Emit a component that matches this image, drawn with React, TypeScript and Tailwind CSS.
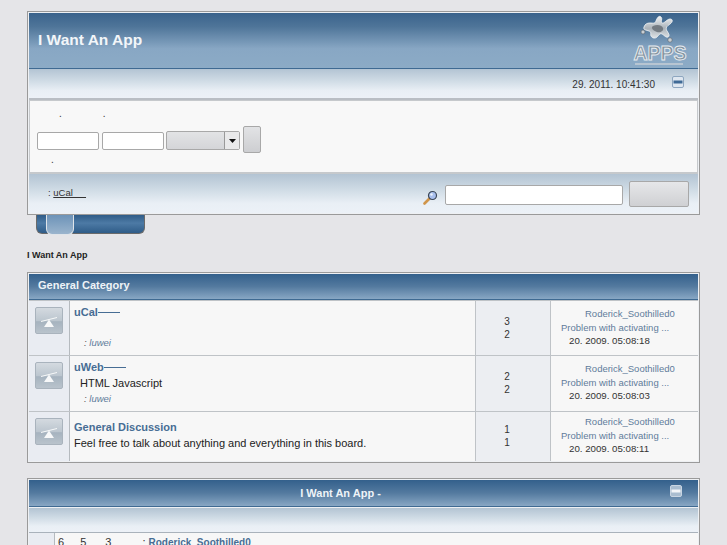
const headBar = "bg-[linear-gradient(to_bottom,#3a638c_0%,#4f7599_25%,#88a7c4_65%,#8cabc6_100%)]";
const subBar = "bg-[linear-gradient(to_bottom,#b3c4d3_0%,#cfdbe5_40%,#e9eff5_75%,#ecf1f7_100%)]";
const catBar = "bg-[linear-gradient(to_bottom,#33608c_0%,#547a9f_50%,#88a7c4_100%)]";

function MinusIcon({ light }: { light?: boolean }) {
  return (
    <svg width="12" height="12" viewBox="0 0 12 12" className="block">
      <rect x="0.5" y="0.5" width="11" height="11" rx="1.5" fill={light ? "#a9bdd0" : "#dfe7f0"} stroke={light ? "#c8d5e2" : "#8ea6bf"} />
      <rect x="1.5" y="4.5" width="9" height="3" fill={light ? "#f2f5f8" : "#3f6a96"} />
    </svg>
  );
}

function Logo() {
  return (
    <svg width="56" height="54" viewBox="0 0 56 54" className="block">
      <defs>
        <linearGradient id="silver" x1="0" y1="0" x2="0" y2="1">
          <stop offset="0" stopColor="#eef1f3" />
          <stop offset="0.55" stopColor="#aab2b9" />
          <stop offset="1" stopColor="#dfe3e6" />
        </linearGradient>
      </defs>
      <path
        d="M17 9c3 0 5 1 6-2s3-6 5-4-1 5 1 6 5-4 8-4 3 3 0 5-5 4-3 7 3 5 1 6-4-2-6-3-3 1-5 3-5 1-6-1 1-4-2-5-6-1-5-4 3-4 6-4z"
        fill="url(#silver)"
        stroke="#f4f6f7"
        strokeWidth="0.8"
      />
      <path d="M20 12c4-2 9-1 10 2s-3 5-6 4-7-4-4-6z" fill="#646c73" opacity="0.8" />
      <circle cx="10" cy="18" r="2" fill="#c9ced3" stroke="#59636c" strokeWidth="0.6" />
      <circle cx="37" cy="26" r="2.2" fill="#c9ced3" stroke="#59636c" strokeWidth="0.6" />
      <text
        x="27"
        y="46"
        textAnchor="middle"
        fontFamily="'Liberation Sans', sans-serif"
        fontWeight="700"
        fontSize="19.5"
        fill="#84939f"
        stroke="#e9edf0"
        strokeWidth="0.9"
      >
        APPS
      </text>
      <rect x="2" y="49" width="48" height="2" fill="#c2ccd5" opacity="0.8" />
    </svg>
  );
}

function SearchIcon() {
  return (
    <svg width="15" height="15" viewBox="0 0 15 15" className="block">
      <path d="M6.5 8.5 1.5 13.5" stroke="#d0954a" strokeWidth="2.6" strokeLinecap="round" />
      <circle cx="9.5" cy="5.5" r="4" fill="#a9c0ee" stroke="#3a4656" strokeWidth="1.2" />
      <circle cx="8.5" cy="4.5" r="1.2" fill="#eef3fb" />
    </svg>
  );
}

function BoardIcon() {
  return (
    <div className="flex h-[27px] w-[28px] items-center justify-center rounded-[2px] border border-[#a9b3bd] bg-[linear-gradient(to_bottom,#d4dae0_0%,#bcc6cf_50%,#a6b3bf_55%,#b9c3cc_100%)]">
      <svg width="18" height="14" viewBox="0 0 18 14">
        <path d="M1 7 17 3v1L1 8z" fill="#f7f8f9" />
        <path d="M9 5.5 14 13H4z" fill="#f7f8f9" />
      </svg>
    </div>
  );
}

type Board = {
  title: string;
  dash?: boolean;
  desc?: string;
  indent?: boolean;
  mod?: string;
  topics: string;
  posts: string;
  date: string;
  rowClass: string;
  bodyPad: string;
  metaPad: string;
};

const boards: Board[] = [
  { title: "uCal", dash: true, mod: "luwei", topics: "3", posts: "2", date: "20. 2009. 05:08:18", rowClass: "h-[55px]", bodyPad: "pt-[4px]", metaPad: "pt-[6px]" },
  { title: "uWeb", dash: true, desc: "HTML Javascript", indent: true, mod: "luwei", topics: "2", posts: "2", date: "20. 2009. 05:08:03", rowClass: "h-[56px]", bodyPad: "pt-[4px]", metaPad: "pt-[6px]" },
  { title: "General Discussion", desc: "Feel free to talk about anything and everything in this board.", topics: "1", posts: "1", date: "20. 2009. 05:08:11", rowClass: "h-[50px]", bodyPad: "pt-[8px]", metaPad: "pt-[3px]" },
];

function BoardRow({ b }: { b: Board }) {
  return (
    <div className={`flex border-t border-[#bfc3c7] first:border-t-0 ${b.rowClass}`}>
      <div className="flex w-[41px] shrink-0 justify-center border-r border-[#b5babf] bg-[#e9ecf2] pt-[6px]">
        <BoardIcon />
      </div>
      <div className={`relative w-[405px] shrink-0 bg-[#f7f7f7] pl-[4px] text-[11px] leading-[15px] text-[#222] ${b.bodyPad}`}>
        <div className="flex items-center font-bold text-[#476d94]">
          {b.title}
          {b.dash && <span className="h-px w-[22px] bg-[#476d94]" />}
        </div>
        {b.desc && <div className={`mt-[1px] ${b.indent ? "pl-[6px]" : ""}`}>{b.desc}</div>}
        {b.mod && (
          <div className="absolute bottom-[6px] left-[14px] text-[9.5px] italic leading-[12px] text-[#5f7c9b]">
            <span className="text-[#555]">: </span>{b.mod}
          </div>
        )}
      </div>
      <div className="flex w-[76px] shrink-0 flex-col items-center justify-center gap-[1px] border-x border-[#bfc3c7] bg-[#eceef2] pr-[12px] text-[10px] leading-[12px] text-[#333]">
        <div>{b.topics}</div>
        <div>{b.posts}</div>
      </div>
      <div className={`flex-1 bg-[#f7f7f7] text-[9.5px] leading-[13.5px] text-[#5f7c9b] ${b.metaPad}`}>
        <div className="pl-[34px]">Roderick_Soothilled0</div>
        <div className="pl-[10px]">Problem with activating ...</div>
        <div className="pl-[18px] text-[9.7px] text-[#333]">{b.date}</div>
      </div>
    </div>
  );
}

export default function App() {
  return (
    <div className="h-[545px] overflow-hidden bg-[#e5e5e8] px-[27px] pt-[11px] font-['Liberation_Sans',Arial,sans-serif]">
      {/* Header box */}
      <div className="relative z-10 border border-[#9a9a9a] bg-[#eef0f3] p-px">
        <div className={`flex h-[56px] items-start justify-between border-b border-[#3f6a92] ${headBar}`}>
          <div className="pl-[9px] pt-[18px] text-[15.5px] font-bold leading-[18px] text-[#f3f6f9]">I Want An App</div>
          <div className="pr-[9px] pt-px"><Logo /></div>
        </div>
        <div className={`flex h-[31px] items-center justify-end border-b-2 border-[#b9bec4] pr-[14px] ${subBar}`}>
          <span className="mr-[17px] mt-[2px] text-[10px] text-[#333]">29. 2011. 10:41:30</span>
          <div className="mb-[4px]"><MinusIcon /></div>
        </div>
        <div className="flex h-[74px] flex-col border border-b-2 border-[#c6c9cc] bg-[#f8f8f8] pl-[7px]">
          <div className="flex h-[18px] items-end pl-[22px] text-[10px] leading-[10px] text-[#333]">
            <span>.</span>
            <span className="ml-[41px]">.</span>
          </div>
          <div className="mt-[6px] flex items-start">
            <input className="mt-[7px] h-[18px] w-[62px] rounded-[2px] border border-[#a8a8a8] bg-white" />
            <input className="ml-[3px] mt-[7px] h-[18px] w-[62px] rounded-[2px] border border-[#a8a8a8] bg-white" />
            <div className="ml-[2px] mt-[6px] flex h-[19px] w-[74px] rounded-[2px] border border-[#a8a8a8] bg-[linear-gradient(to_bottom,#e2e3e5,#d4d5d8)]">
              <div className="flex-1" />
              <div className="flex w-[15px] items-center justify-center border-l border-[#999] bg-[#e9e9ea]">
                <svg width="7" height="4" viewBox="0 0 7 4"><path d="M0 0h7L3.5 4z" fill="#111" /></svg>
              </div>
            </div>
            <div className="ml-[3px] mt-px h-[27px] w-[18px] rounded-[2px] border border-[#a8a8a8] bg-[linear-gradient(to_bottom,#e2e3e5,#cdced1)]" />
          </div>
          <div className="mt-[2px] pl-[14px] text-[10px] leading-[10px] text-[#333]">.</div>
        </div>
        <div className={`flex h-[39px] items-center justify-between pr-[9px] ${subBar}`}>
          <div className="pb-px pl-[19px] text-[9.5px] text-[#333]">
            : <span className="underline">uCal&nbsp;&nbsp;&nbsp;&nbsp;&nbsp;</span>
          </div>
          <div className="flex items-center">
            <div className="mt-[7px]"><SearchIcon /></div>
            <input className="ml-[7px] mt-[2px] h-[20px] w-[178px] rounded-[2px] border border-[#a8a8a8] bg-white" />
            <div className="ml-[6px] h-[26px] w-[60px] rounded-[2px] border border-[#a8a8a8] bg-[linear-gradient(to_bottom,#e6e7e9,#cfd0d3)]" />
          </div>
        </div>
      </div>

      {/* Tabs tucked under the header */}
      <div className="ml-[9px] flex h-[19px] w-[109px] rounded-b-[6px] border border-t-0 border-[#6a6a6a] bg-[linear-gradient(to_bottom,#2f5c88,#4d7aa5_45%,#2f5c88)]">
        <div className="ml-[9px] h-[20px] w-[28px] rounded-b-[6px] border border-t-0 border-[#dfe4e9] bg-[linear-gradient(to_bottom,#6d93b8,#9ab4cd)]" />
      </div>

      <div className="mt-[15px] text-[9px] font-bold leading-[12px] text-[#222]">I Want An App</div>

      {/* Board list */}
      <div className="mt-[11px] border border-[#9a9a9a] bg-[#eef0f3] p-px">
        <div className={`flex h-[26px] items-center border-b border-[#3f6a92] pb-[2px] pl-[9px] text-[11px] font-bold text-[#eef3f7] ${catBar}`}>
          General Category
        </div>
        {boards.map((b) => <BoardRow key={b.title} b={b} />)}
      </div>

      {/* Info center */}
      <div className="mt-[15px] border border-[#9a9a9a] bg-[#eef0f3] p-px">
        <div className={`relative flex h-[27px] items-center justify-center border-b border-[#3f6a92] pr-[46px] text-[11px] font-bold text-[#eef3f7] ${catBar}`}>
          I Want An App -
          <div className="absolute right-[16px] top-[5px]"><MinusIcon light /></div>
        </div>
        <div className={`mt-px h-[25px] border-b border-[#a9b2bb] ${subBar}`} />
        <div className="flex h-[40px] bg-[#f7f7f7]">
          <div className="w-[26px] border-r border-[#b5babf] bg-[#e9ecf2]" />
          <div className="pl-[3px] pt-[3px] text-[11px] leading-[13px] text-[#333]">
            6<span className="ml-[16px]">5</span><span className="ml-[19px]">3</span>
            <span className="ml-[31px]">: </span>
            <span className="text-[10px] font-bold text-[#476d94]">Roderick_Soothilled0</span>
          </div>
        </div>
      </div>
    </div>
  );
}
